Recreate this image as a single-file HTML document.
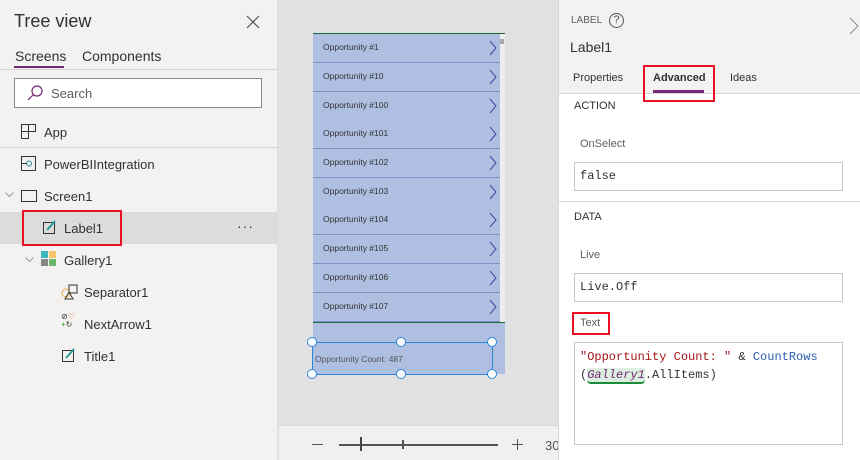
<!DOCTYPE html>
<html><head><style>
*{box-sizing:border-box;margin:0;padding:0}
body{width:860px;height:460px;overflow:hidden;position:relative;font-family:"Liberation Sans",sans-serif;background:#e1e1e1;color:#323130}
.a{position:absolute}
.t{font-size:13px;white-space:nowrap}
.row{position:absolute;left:313px;width:187px;height:29px;background:#aebfe1;border-bottom:1.5px solid #8090c8;font-size:8.5px;color:#333;padding:8px 0 0 10px}
.row svg{position:absolute;right:3px;top:6px}
.mono{font-family:"Liberation Mono",monospace;font-size:12px}
.box{position:absolute;left:574px;width:269px;border:1px solid #c8c6c4;background:#fff}
.h{width:10px;height:10px;border-radius:50%;background:#fff;border:1.5px solid #2b88d8;position:absolute}
</style></head><body>
<div class="a" style="left:0;top:0;width:278px;height:460px;background:#f3f2f1;border-right:1px solid #e1dfdd"></div>
<div class="a" style="left:14px;top:11px;font-size:18px;color:#323130">Tree view</div>
<svg class="a" style="left:246px;top:15px" width="14" height="14"><path d="M1 1L13 13M13 1L1 13" stroke="#555" stroke-width="1.2"/></svg>
<div class="a t" style="left:15px;top:48px;font-size:14px">Screens</div>
<div class="a t" style="left:82px;top:48px;font-size:14px">Components</div>
<div class="a" style="left:14px;top:66px;width:50px;height:2px;background:#742774"></div>
<div class="a" style="left:0;top:69px;width:278px;height:1px;background:#d5d3d1"></div>
<div class="a" style="left:14px;top:78px;width:248px;height:30px;border:1px solid #8a8886;background:#fff"></div>
<svg class="a" style="left:26px;top:84px" width="18" height="18"><circle cx="11" cy="7" r="5" fill="none" stroke="#742774" stroke-width="1.2"/><path d="M7.5 10.5L2 16" stroke="#742774" stroke-width="1.2"/></svg>
<div class="a t" style="left:51px;top:86px;color:#605e5c">Search</div>
<svg class="a" style="left:21px;top:124px" width="15" height="15"><path d="M.5 .5H7.5V14.5H.5ZM7.5 .5H14.5V7.5H.5" fill="none" stroke="#333"/></svg>
<div class="a t" style="left:44px;top:125px">App</div>
<div class="a" style="left:0;top:147px;width:278px;height:1px;background:#d5d3d1"></div>
<svg class="a" style="left:21px;top:156px" width="15" height="15"><rect x=".5" y=".5" width="14" height="14" fill="none" stroke="#333"/><circle cx="8" cy="7.5" r="2.5" fill="none" stroke="#2a8a9a"/><path d="M0 7.5H6" stroke="#333"/></svg>
<div class="a t" style="left:44px;top:157px">PowerBIIntegration</div>
<svg class="a" style="left:5px;top:192px" width="9" height="6"><path d="M.5 .5L4.5 4.5 8.5 .5" fill="none" stroke="#999"/></svg>
<div class="a" style="left:21px;top:190px;width:16px;height:12px;border:1px solid #333"></div>
<div class="a t" style="left:44px;top:189px">Screen1</div>
<div class="a" style="left:0;top:212px;width:278px;height:32px;background:#dcdcdc"></div>
<div class="a" style="left:22px;top:210px;width:100px;height:36px;border:2.5px solid #e81123"></div>
<svg class="a" style="left:43px;top:219px" width="14" height="15"><rect x=".5" y="3.5" width="11" height="11" fill="none" stroke="#333"/><path d="M4 11L12 2" stroke="#2a9a9a" stroke-width="2"/></svg>
<div class="a t" style="left:64px;top:221px">Label1</div>
<div class="a t" style="left:237px;top:218px;font-size:14px;color:#333;letter-spacing:1px">···</div>
<svg class="a" style="left:25px;top:257px" width="9" height="6"><path d="M.5 .5L4.5 4.5 8.5 .5" fill="none" stroke="#999"/></svg>
<svg class="a" style="left:41px;top:251px" width="16" height="16"><rect x="0" y="0" width="7" height="7" fill="#3bb7c2"/><rect x="8" y="0" width="7" height="7" fill="#f8c56a"/><rect x="0" y="8" width="7" height="7" fill="#888"/><rect x="8" y="8" width="7" height="7" fill="#6bb86b"/></svg>
<div class="a t" style="left:64px;top:253px">Gallery1</div>
<svg class="a" style="left:61px;top:284px" width="17" height="16"><circle cx="5" cy="9" r="4" fill="none" stroke="#e8b040"/><rect x="8" y="1" width="8" height="8" fill="none" stroke="#333"/><path d="M4 15L8 8 12 15Z" fill="none" stroke="#333"/></svg>
<div class="a t" style="left:84px;top:285px">Separator1</div>
<div class="a" style="left:61px;top:313px;font-size:8px;color:#333;line-height:8px">⊘<span style="color:#e05030">♡</span><br><span style="color:#2a9a2a">+</span>↻</div>
<div class="a t" style="left:84px;top:317px">NextArrow1</div>
<svg class="a" style="left:62px;top:347px" width="14" height="15"><rect x=".5" y="3.5" width="11" height="11" fill="none" stroke="#333"/><path d="M4 11L12 2" stroke="#2a9a9a" stroke-width="2"/></svg>
<div class="a t" style="left:84px;top:349px">Title1</div>
<div class="a" style="left:279px;top:425px;width:279px;height:35px;background:#f0f0f0;border-top:1px solid #d6d6d6"></div>
<div class="a" style="left:312px;top:444px;width:11px;height:1px;background:#555"></div>
<div class="a" style="left:339px;top:444px;width:159px;height:2px;background:#555"></div>
<div class="a" style="left:360px;top:437px;width:2px;height:14px;background:#444"></div>
<div class="a" style="left:402px;top:440px;width:2px;height:9px;background:#555"></div>
<div class="a" style="left:512px;top:444px;width:11px;height:1px;background:#555"></div>
<div class="a" style="left:517px;top:439px;width:1px;height:11px;background:#555"></div>
<div class="a t" style="left:545px;top:438px;color:#555">30</div>
<div class="a" style="left:313px;top:33px;width:192px;height:341px;background:#aebfe1"></div>
<div class="a" style="left:313px;top:33px;width:192px;height:1px;background:#1b6b3a"></div>
<div class="a" style="left:313px;top:322px;width:192px;height:1px;background:#1b6b3a"></div>
<div class="a" style="left:500px;top:34px;width:5px;height:288px;background:#eee"></div>
<div class="a" style="left:500px;top:39px;width:4px;height:5px;background:#aaa"></div>
<div class="row" style="top:34px">Opportunity #1<svg width="8" height="16"><path d="M1 1L7 8 1 15" fill="none" stroke="#3a4aa0"/></svg></div>
<div class="row" style="top:63px">Opportunity #10<svg width="8" height="16"><path d="M1 1L7 8 1 15" fill="none" stroke="#3a4aa0"/></svg></div>
<div class="row" style="top:92px">Opportunity #100<svg width="8" height="16"><path d="M1 1L7 8 1 15" fill="none" stroke="#3a4aa0"/></svg></div>
<div class="row" style="top:120px">Opportunity #101<svg width="8" height="16"><path d="M1 1L7 8 1 15" fill="none" stroke="#3a4aa0"/></svg></div>
<div class="row" style="top:149px">Opportunity #102<svg width="8" height="16"><path d="M1 1L7 8 1 15" fill="none" stroke="#3a4aa0"/></svg></div>
<div class="row" style="top:178px">Opportunity #103<svg width="8" height="16"><path d="M1 1L7 8 1 15" fill="none" stroke="#3a4aa0"/></svg></div>
<div class="row" style="top:206px">Opportunity #104<svg width="8" height="16"><path d="M1 1L7 8 1 15" fill="none" stroke="#3a4aa0"/></svg></div>
<div class="row" style="top:235px">Opportunity #105<svg width="8" height="16"><path d="M1 1L7 8 1 15" fill="none" stroke="#3a4aa0"/></svg></div>
<div class="row" style="top:264px">Opportunity #106<svg width="8" height="16"><path d="M1 1L7 8 1 15" fill="none" stroke="#3a4aa0"/></svg></div>
<div class="row" style="top:293px">Opportunity #107<svg width="8" height="16"><path d="M1 1L7 8 1 15" fill="none" stroke="#3a4aa0"/></svg></div>
<div class="a" style="left:312px;top:342px;width:181px;height:33px;border:1.5px solid #2b88d8"></div>
<div class="a" style="left:315px;top:354px;font-size:8.5px;color:#555">Opportunity Count: 487</div>
<div class="h" style="left:307px;top:337px"></div><div class="h" style="left:396px;top:337px"></div><div class="h" style="left:487px;top:337px"></div>
<div class="h" style="left:307px;top:369px"></div><div class="h" style="left:396px;top:369px"></div><div class="h" style="left:487px;top:369px"></div>
<div class="a" style="left:558px;top:0;width:302px;height:460px;background:#fff;border-left:1px solid #d6d6d6"></div>
<div class="a" style="left:559px;top:0;width:301px;height:94px;background:#f3f2f1;border-bottom:1px solid #d6d6d6"></div>
<div class="a t" style="left:571px;top:15px;font-size:10px;color:#605e5c">LABEL</div>
<div class="a" style="left:609px;top:13px;width:15px;height:15px;border:1px solid #555;border-radius:50%;font-size:11px;text-align:center;line-height:13px;color:#555">?</div>
<svg class="a" style="left:849px;top:17px" width="10" height="18"><path d="M1 1L9 9 1 17" fill="none" stroke="#888"/></svg>
<div class="a t" style="left:570px;top:39px;font-size:14px">Label1</div>
<div class="a t" style="left:573px;top:72px;font-size:11px">Properties</div>
<div class="a t" style="left:653px;top:72px;font-size:11px;font-weight:bold">Advanced</div>
<div class="a" style="left:653px;top:90px;width:51px;height:3px;background:#742774"></div>
<div class="a" style="left:643px;top:65px;width:72px;height:37px;border:2.5px solid #e81123"></div>
<div class="a t" style="left:730px;top:72px;font-size:11px">Ideas</div>
<div class="a t" style="left:574px;top:100px;font-size:11px">ACTION</div>
<div class="a t" style="left:580px;top:138px;font-size:11px;color:#605e5c">OnSelect</div>
<div class="box" style="top:162px;height:29px"></div>
<div class="a mono" style="left:580px;top:169px">false</div>
<div class="a" style="left:559px;top:201px;width:301px;height:1px;background:#d6d6d6"></div>
<div class="a t" style="left:574px;top:211px;font-size:11px">DATA</div>
<div class="a t" style="left:580px;top:249px;font-size:11px;color:#605e5c">Live</div>
<div class="box" style="top:273px;height:29px"></div>
<div class="a mono" style="left:580px;top:280px">Live.Off</div>
<div class="a" style="left:572px;top:312px;width:38px;height:23px;border:2.5px solid #e81123"></div>
<div class="a t" style="left:580px;top:317px;font-size:11px;color:#605e5c">Text</div>
<div class="box" style="top:342px;height:103px"></div>
<div class="a mono" style="left:580px;top:350px;color:#a31515">"Opportunity Count: " <span style="color:#333">&amp;</span> <span style="color:#2b5fb0">CountRows</span></div>
<div class="a mono" style="left:580px;top:368px;color:#333">(<span style="font-style:italic;color:#742774;background:#dcefe0;border-bottom:2px solid #1b8a3a;border-radius:0 0 4px 4px">Gallery1</span>.AllItems)</div>
</body></html>
